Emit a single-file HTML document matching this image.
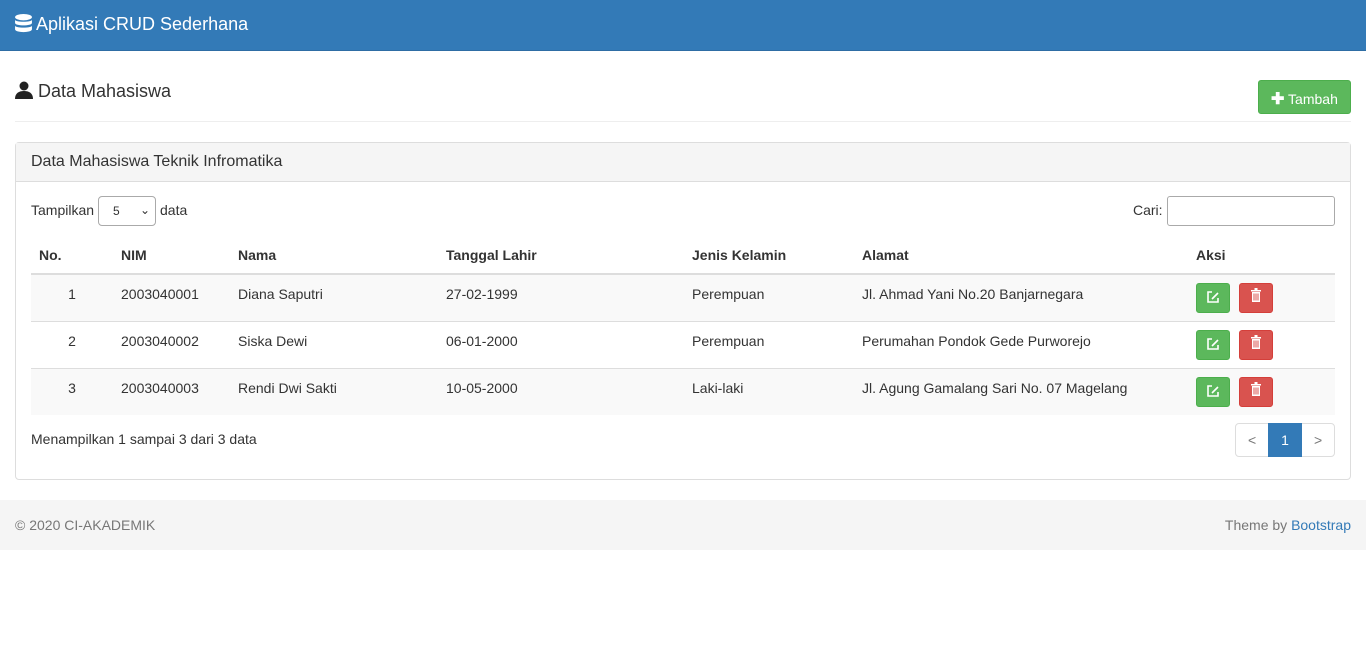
<!DOCTYPE html>
<html><head><meta charset="utf-8"><style>
*{box-sizing:border-box;margin:0;padding:0}
body{width:1366px;height:653px;font-family:"Liberation Sans",sans-serif;font-size:14px;color:#333;background:#fff;position:relative;overflow:hidden}
.nav{position:absolute;left:0;top:0;width:1366px;height:51px;background:#337ab7;border-bottom:1px solid #2e6da4}
.nav .t{position:absolute;left:15px;top:14px;color:#fff;font-size:18px}
.abs{position:absolute}
.btn{position:absolute;border-radius:3px;color:#fff}
.g{background:#5cb85c;border:1px solid #4cae4c}
.r{background:#d9534f;border:1px solid #d43f3a}
.panel{position:absolute;left:15px;top:142px;width:1336px;height:338px;border:1px solid #ddd;border-radius:4px}
.ph{height:39px;background:#f5f5f5;border-bottom:1px solid #ddd;padding:10px 15px;font-size:16px}
table{position:absolute;left:31px;top:236px;width:1304px;border-collapse:collapse}
th{text-align:left;height:38px;border-bottom:2px solid #ddd;padding:0 8px;font-weight:bold}
td{height:47px;padding:0 8px 8px;border-top:1px solid #ddd;vertical-align:middle}
tr.s td{background:#f9f9f9}
.foot{position:absolute;left:0;top:500px;width:1366px;height:50px;background:#f5f5f5;color:#777}
</style></head><body>
<div class="nav"><div class="t"><svg width="17" height="19" viewBox="0 0 16 18" style="vertical-align:-3px"><ellipse cx="8" cy="3" rx="8" ry="3" fill="#fff"/><path d="M0 5.5c0 2.5 16 2.5 16 0v3c0 3-16 3-16 0z M0 11c0 2.5 16 2.5 16 0v3.5c0 3.5-16 3.5-16 0z" fill="#fff"/></svg> Aplikasi CRUD Sederhana</div></div>
<div class="abs" style="left:15px;top:81px;font-size:18px"><svg width="18" height="18" viewBox="0 0 18 18" style="vertical-align:-2px"><circle cx="9" cy="5" r="4.5" fill="#222"/><path d="M0 18c0-6 4-8 9-8s9 2 9 8z" fill="#222"/></svg> Data Mahasiswa</div>
<div class="btn g" style="left:1258px;top:80px;width:93px;height:34px;padding:8px 12px;font-size:14px"><b style="font-size:16px">✚</b> Tambah</div>
<div class="abs" style="left:15px;top:121px;width:1336px;border-top:1px solid #eee"></div>
<div class="panel"><div class="ph">Data Mahasiswa Teknik Infromatika</div></div>
<div class="abs" style="left:31px;top:202px">Tampilkan</div>
<div class="abs" style="left:98px;top:196px;width:58px;height:30px;border:1px solid #aaa;border-radius:4px;font-size:12px;padding:7px 14px">5 <span style="position:absolute;right:5px;top:6px">⌄</span></div>
<div class="abs" style="left:160px;top:202px">data</div>
<div class="abs" style="left:1133px;top:202px">Cari:</div>
<div class="abs" style="left:1167px;top:196px;width:168px;height:30px;border:1px solid #aaa;border-radius:3px"></div>
<table>
<tr><th style="width:82px">No.</th><th style="width:117px">NIM</th><th style="width:208px">Nama</th><th style="width:246px">Tanggal Lahir</th><th style="width:170px">Jenis Kelamin</th><th style="width:334px">Alamat</th><th>Aksi</th></tr>
<tr class="s"><td style="text-align:center">1</td><td>2003040001</td><td>Diana Saputri</td><td>27-02-1999</td><td>Perempuan</td><td>Jl. Ahmad Yani No.20 Banjarnegara</td><td></td></tr>
<tr><td style="text-align:center">2</td><td>2003040002</td><td>Siska Dewi</td><td>06-01-2000</td><td>Perempuan</td><td>Perumahan Pondok Gede Purworejo</td><td></td></tr>
<tr class="s"><td style="text-align:center">3</td><td>2003040003</td><td>Rendi Dwi Sakti</td><td>10-05-2000</td><td>Laki-laki</td><td>Jl. Agung Gamalang Sari No. 07 Magelang</td><td></td></tr>
</table>
<div class="btn g" style="left:1196px;top:283px;width:34px;height:30px"></div><div class="btn r" style="left:1239px;top:283px;width:34px;height:30px"></div>
<div class="btn g" style="left:1196px;top:330px;width:34px;height:30px"></div><div class="btn r" style="left:1239px;top:330px;width:34px;height:30px"></div>
<div class="btn g" style="left:1196px;top:377px;width:34px;height:30px"></div><div class="btn r" style="left:1239px;top:377px;width:34px;height:30px"></div>
<svg class="abs" style="left:0;top:0" width="1366" height="653">
<g fill="none" stroke="#fff" stroke-width="1.6">
<path d="M1212 292h-4v10h10v-4M1212 299l6-6"/><path d="M1212 339h-4v10h10v-4M1212 346l6-6"/><path d="M1212 386h-4v10h10v-4M1212 393l6-6"/>
</g>
<g fill="#fff">
<path d="M1251 290h10v1.5h-10zM1254.5 288h3v2h-3zM1252 292h8v10h-8z"/>
<path d="M1251 337h10v1.5h-10zM1254.5 335h3v2h-3zM1252 339h8v10h-8z"/>
<path d="M1251 384h10v1.5h-10zM1254.5 382h3v2h-3zM1252 386h8v10h-8z"/>
</g>
<g fill="#d9534f"><rect x="1253.5" y="293.5" width="1" height="7"/><rect x="1255.5" y="293.5" width="1" height="7"/><rect x="1257.5" y="293.5" width="1" height="7"/>
<rect x="1253.5" y="340.5" width="1" height="7"/><rect x="1255.5" y="340.5" width="1" height="7"/><rect x="1257.5" y="340.5" width="1" height="7"/>
<rect x="1253.5" y="387.5" width="1" height="7"/><rect x="1255.5" y="387.5" width="1" height="7"/><rect x="1257.5" y="387.5" width="1" height="7"/></g>
</svg>
<div class="abs" style="left:31px;top:431px">Menampilkan 1 sampai 3 dari 3 data</div>
<div class="abs" style="left:1235px;top:423px;width:100px;height:34px;border:1px solid #ddd;border-radius:4px"></div>
<div class="abs" style="left:1248px;top:432px;color:#777">&lt;</div>
<div class="abs" style="left:1268px;top:423px;width:34px;height:34px;background:#337ab7;color:#fff;text-align:center;line-height:34px">1</div>
<div class="abs" style="left:1314px;top:432px;color:#777">&gt;</div>
<div class="foot"><span class="abs" style="left:15px;top:17px">© 2020 CI-AKADEMIK</span><span class="abs" style="right:15px;top:17px">Theme by <span style="color:#337ab7">Bootstrap</span></span></div>
</body></html>
